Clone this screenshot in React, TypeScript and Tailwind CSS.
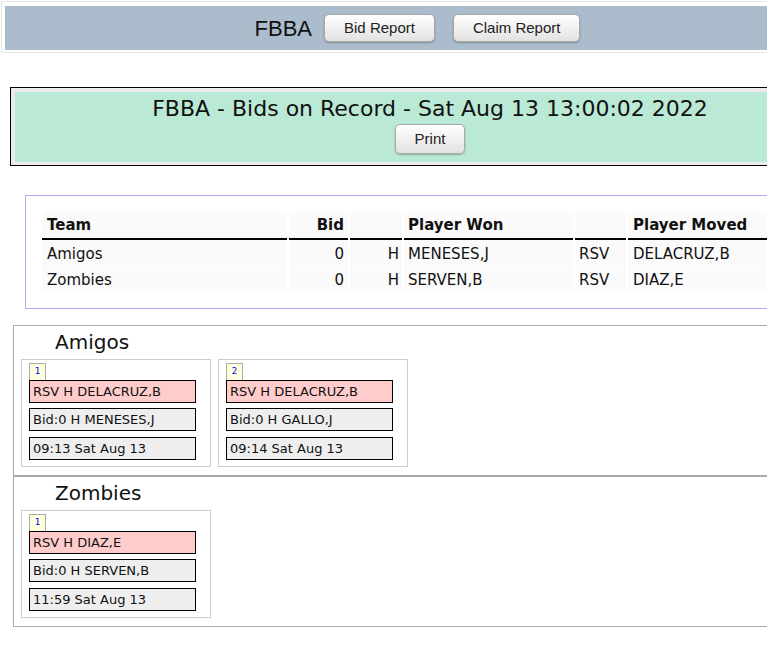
import React from "react";

type Bid = {
  no: number;
  moved: string;
  won: string;
  time: string;
};

type TeamBids = {
  team: string;
  bids: Bid[];
};

const summary = [
  { team: "Amigos", bid: 0, hand: "H", won: "MENESES,J", type: "RSV", moved: "DELACRUZ,B" },
  { team: "Zombies", bid: 0, hand: "H", won: "SERVEN,B", type: "RSV", moved: "DIAZ,E" },
];

const teams: TeamBids[] = [
  {
    team: "Amigos",
    bids: [
      { no: 1, moved: "RSV H DELACRUZ,B", won: "Bid:0 H MENESES,J", time: "09:13 Sat Aug 13" },
      { no: 2, moved: "RSV H DELACRUZ,B", won: "Bid:0 H GALLO,J", time: "09:14 Sat Aug 13" },
    ],
  },
  {
    team: "Zombies",
    bids: [{ no: 1, moved: "RSV H DIAZ,E", won: "Bid:0 H SERVEN,B", time: "11:59 Sat Aug 13" }],
  },
];

const verdana = { fontFamily: '"DejaVu Sans", Verdana, sans-serif' };
const arial = { fontFamily: '"Liberation Sans", Arial, sans-serif' };

function Button({ label, className = "" }: { label: string; className?: string }) {
  return (
    <button
      className={`px-[19px] rounded-[5px] border border-[#a8a8a8] bg-gradient-to-b from-white to-[#e2e2e2] text-[15px] text-[#222] shadow-[0_1px_2px_rgba(0,0,0,0.25)] ${className}`}
      style={arial}
    >
      {label}
    </button>
  );
}

function BidCard({ bid }: { bid: Bid }) {
  return (
    <div className="w-[190px] border border-[#cccccc] pt-[3px] pl-[7px] pr-[14px] pb-[6px]">
      {/* bid number tab */}
      <div
        className="w-[17px] h-[17px] border border-b-0 border-[#aaaaaa] bg-[#ffffdd] text-[9px] text-[#0000ff] flex items-center justify-center"
        style={{ fontFamily: '"DejaVu Sans Mono", monospace' }}
      >
        {bid.no}
      </div>
      <div className="h-[23px] border border-black bg-[#ffcccc] pl-[3px] flex items-center text-[13px] text-[#111]">
        {bid.moved}
      </div>
      <div className="mt-[5px] h-[23px] border border-black bg-[#eeeeee] pl-[3px] flex items-center text-[13px] text-[#111]">
        {bid.won}
      </div>
      <div className="mt-[6px] h-[23px] border border-black bg-[#eeeeee] pl-[3px] flex items-center text-[13px] text-[#111]">
        {bid.time}
      </div>
    </div>
  );
}

export default function App() {
  return (
    <div className="w-[767px] h-[656px] overflow-hidden bg-white text-black">
      <div className="w-[880px]">
        {/* Top nav bar */}
        <div className="mt-[1px] ml-[1px] w-[833px] border border-[#e6e6e6] pt-[4px] pb-[2px] px-[3px]">
          <div className="h-[44px] bg-[#abbccc] flex items-center justify-center">
            <span className="text-[22px] text-[#111] mr-[12px]" style={arial}>
              FBBA
            </span>
            <Button label="Bid Report" className="h-[28px]" />
            <Button label="Claim Report" className="h-[28px] ml-[18px]" />
          </div>
        </div>

        {/* Title box */}
        <div className="mt-[34px] ml-[10px] w-[840px] border border-black bg-[#ebebeb] pt-[4px] pb-[3px] px-[4px]">
          <div className="h-[70px] bg-[#bae9d6] pt-[4px] flex flex-col items-center">
            <div className="text-[22px] leading-[26px] text-[#111]" style={verdana}>
              FBBA - Bids on Record - Sat Aug 13 13:00:02 2022
            </div>
            <Button label="Print" className="h-[30px] mt-[2px]" />
          </div>
        </div>

        {/* Summary table */}
        <div
          className="mt-[29px] ml-[25px] w-[840px] border border-[#aaaaf8] pt-[16px] pb-[16px] pl-[16px]"
          style={verdana}
        >
          <table className="border-separate border-spacing-x-[2px] border-spacing-y-0 -ml-[2px] text-[15px] text-[#111]">
            <thead>
              <tr className="font-bold">
                <th className="h-[28px] pt-[1px] w-[245px] bg-[#fafafa] text-left pl-[5px] border-b-2 border-black">Team</th>
                <th className="h-[28px] pt-[1px] w-[59px] bg-[#fafafa] text-right pr-[4px] border-b-2 border-black">Bid</th>
                <th className="h-[28px] pt-[1px] w-[52px] bg-[#fafafa] border-b-2 border-black"></th>
                <th className="h-[28px] pt-[1px] w-[169px] bg-[#fafafa] text-left pl-[4px] border-b-2 border-black">Player Won</th>
                <th className="h-[28px] pt-[1px] w-[51px] bg-[#fafafa] border-b-2 border-black"></th>
                <th className="h-[28px] pt-[1px] w-[160px] bg-[#fafafa] text-left pl-[5px] border-b-2 border-black">Player Moved</th>
              </tr>
            </thead>
            <tbody className="leading-[21px]">
              {summary.map((row) => (
                <tr key={row.team}>
                  <td className="h-[26px] pt-[4px] bg-[#fafafa] pl-[5px] border-b border-white">{row.team}</td>
                  <td className="h-[26px] pt-[4px] bg-[#fafafa] text-right pr-[4px] border-b border-white">{row.bid}</td>
                  <td className="h-[26px] pt-[4px] bg-[#fafafa] text-right pr-[3px] border-b border-white">{row.hand}</td>
                  <td className="h-[26px] pt-[4px] bg-[#fafafa] pl-[4px] border-b border-white">{row.won}</td>
                  <td className="h-[26px] pt-[4px] bg-[#fafafa] pl-[4px] border-b border-white">{row.type}</td>
                  <td className="h-[26px] pt-[4px] bg-[#fafafa] pl-[5px] border-b border-white">{row.moved}</td>
                </tr>
              ))}
            </tbody>
          </table>
        </div>

        {/* Bids per team */}
        <div className="mt-[16px] ml-[13px] w-[840px]" style={verdana}>
          {teams.map((t) => (
            <div key={t.team} className="border border-[#aaaaaa] pt-[4px] pb-[8px] pl-[7px]">
              <div className="h-[24px] leading-[24px] mb-[5px] ml-[34px] text-[20px] text-[#111]">{t.team}</div>
              <div className="flex gap-[7px]">
                {t.bids.map((b) => (
                  <BidCard key={b.no} bid={b} />
                ))}
              </div>
            </div>
          ))}
        </div>
      </div>
    </div>
  );
}
